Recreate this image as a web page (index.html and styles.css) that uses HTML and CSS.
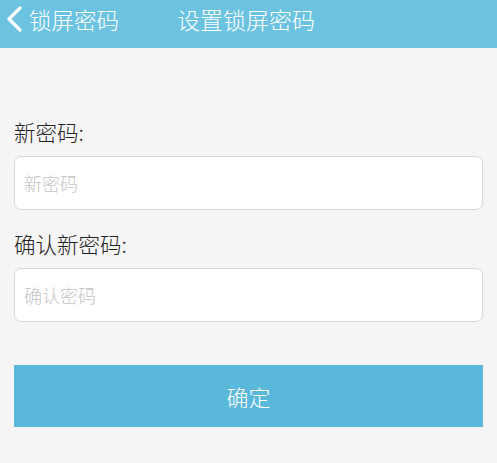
FILE: index.html
```html
<!DOCTYPE html>
<html lang="zh-CN">
<head>
    <meta charset="UTF-8">
    <meta name="viewport" content="width=device-width, initial-scale=1.0">
    <title>设置锁屏密码</title>
    <link rel="stylesheet" href="styles.css">
</head>
<body>
    <header class="top-bar">
        <a class="back" href="#">
            <svg class="back-icon" width="18" height="26" viewBox="0 0 18 26">
                <path d="M15 2 L4 13 L15 24" fill="none" stroke="#fff" stroke-width="3.2" stroke-linecap="round" stroke-linejoin="round"/>
            </svg>
            <span>锁屏密码</span>
        </a>
        <h1 class="title">设置锁屏密码</h1>
    </header>

    <form class="pwd-form" onsubmit="return false;">
        <label class="field-label" for="pwd">新密码:</label>
        <input class="field-input" id="pwd" type="password" placeholder="新密码">

        <label class="field-label" for="pwd2">确认新密码:</label>
        <input class="field-input" id="pwd2" type="password" placeholder="确认密码">

        <button class="submit-btn" type="submit">确定</button>
    </form>
</body>
</html>
```

FILE: styles.css
```css
* {
    margin: 0;
    padding: 0;
    box-sizing: border-box;
    font-family: "Noto Sans CJK SC", "Noto Sans", sans-serif;
}

body {
    background: #f5f5f5;
    color: #222;
}

.top-bar {
    height: 48px;
    background: #6bc3e1;
    display: flex;
    align-items: flex-start;
    padding: 3px 0 0 5px;
}

.back {
    display: flex;
    align-items: center;
    color: #fff;
    text-decoration: none;
    font-size: 22.5px;
    font-weight: 300;
    line-height: 32px;
}

.back-icon {
    margin-right: 6px;
}

.title {
    margin-left: 58px;
    font-size: 23px;
    font-weight: 300;
    color: #fff;
    line-height: 32px;
}

.pwd-form {
    display: flex;
    flex-direction: column;
    padding: 69px 14px 0 14px;
}

.field-label {
    font-size: 21.5px;
    font-weight: 300;
    line-height: 29px;
    color: #222;
    margin-bottom: 10px;
}

.field-input {
    height: 54px;
    border: 1px solid #d6d6d6;
    border-radius: 7px;
    background: #fff;
    padding: 0 9px;
    font-size: 18px;
    font-weight: 300;
    margin-bottom: 19px;
    outline: none;
}

.field-input::placeholder {
    color: #c4c4c4;
}

.submit-btn {
    margin-top: 24px;
    height: 62px;
    border: none;
    background: #5ab8db;
    color: #fff;
    font-size: 22px;
    font-weight: 300;
    cursor: pointer;
}
```
